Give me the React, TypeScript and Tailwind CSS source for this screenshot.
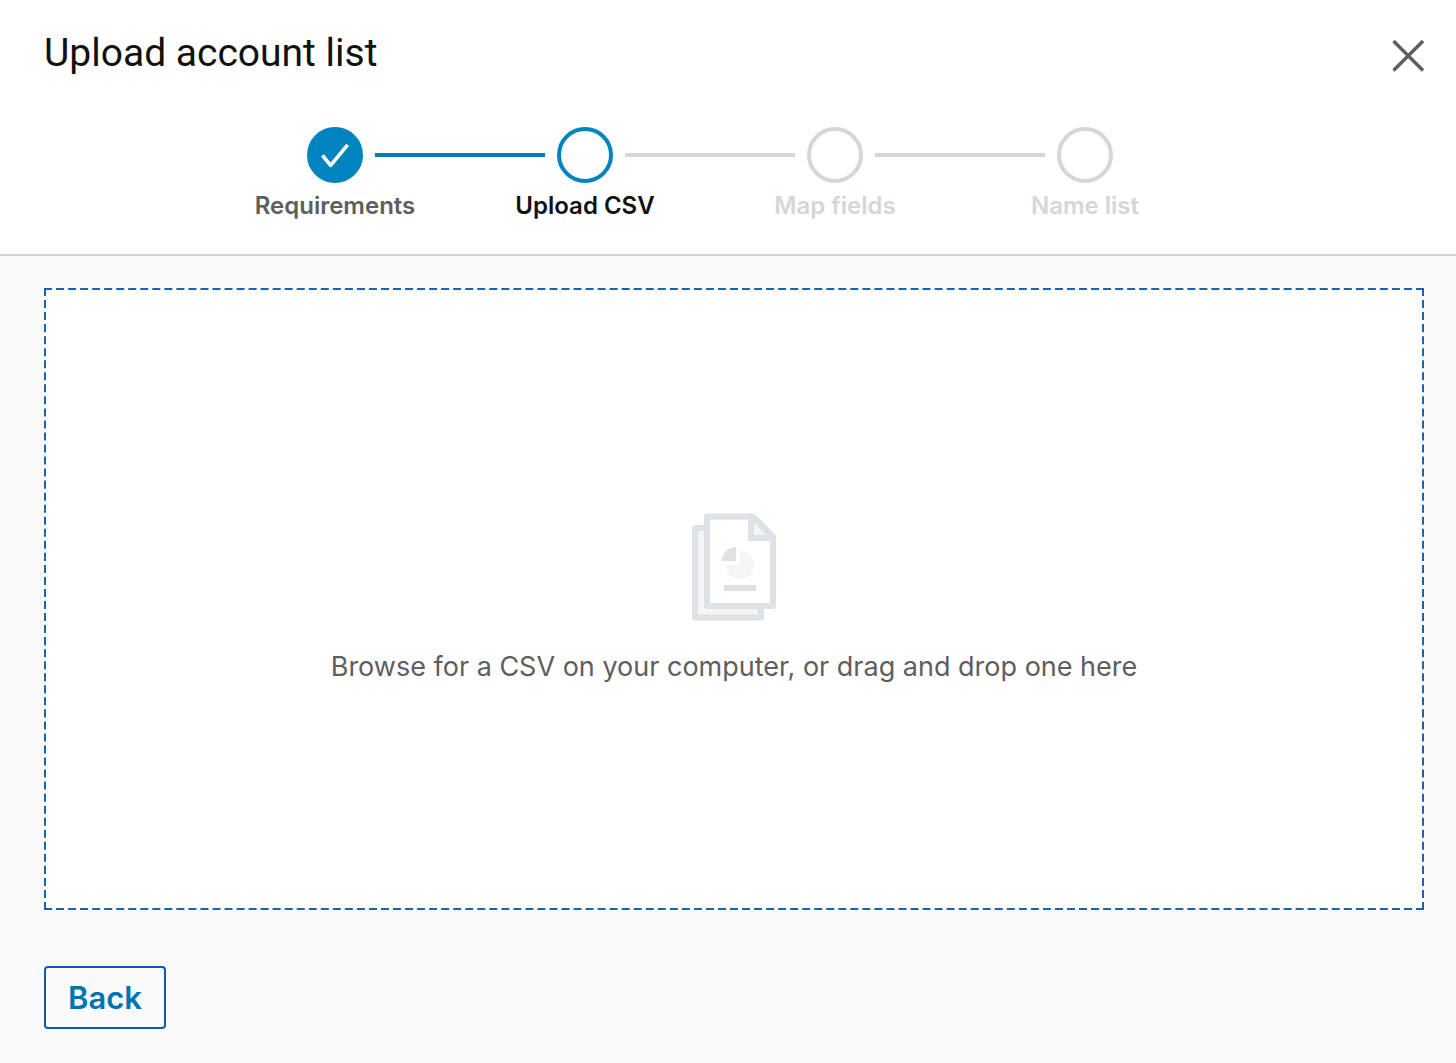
import React from 'react';

type StepStatus = 'done' | 'current' | 'upcoming';

interface Step {
  label: string;
  status: StepStatus;
}

const steps: Step[] = [
  { label: 'Requirements', status: 'done' },
  { label: 'Upload CSV', status: 'current' },
  { label: 'Map fields', status: 'upcoming' },
  { label: 'Name list', status: 'upcoming' },
];

const circleStyles: Record<StepStatus, string> = {
  done: 'border-[#0084bf] bg-[#0084bf]',
  current: 'border-[#0084bf] bg-white',
  upcoming: 'border-[#d6d6d6] bg-white',
};

const labelStyles: Record<StepStatus, string> = {
  done: 'text-[#5e5e5e]',
  current: 'text-[#111111]',
  upcoming: 'text-[#d6d6d6]',
};

const Connector: React.FC<{ hidden: boolean; active: boolean }> = ({ hidden, active }) => (
  <span className={`h-1 flex-1 ${hidden ? 'bg-transparent' : active ? 'bg-[#007dbb]' : 'bg-[#d6d6d6]'}`} />
);

const Stepper: React.FC = () => (
  <ol className="mx-auto flex w-full max-w-[1000px]">
    {steps.map((step, i) => (
      <li
        key={step.label}
        aria-current={step.status === 'current' ? 'step' : undefined}
        className="flex flex-1 flex-col items-center"
      >
        <div className="flex w-full items-center">
          <Connector hidden={i === 0} active={step.status !== 'upcoming'} />
          <span
            className={`mx-3 flex size-14 items-center justify-center rounded-full border-4 ${circleStyles[step.status]}`}
          >
            {step.status === 'done' && (
              <svg viewBox="0 0 48 48" className="size-12 shrink-0" fill="none" stroke="#fff" strokeWidth="3.6" aria-hidden="true">
                <path d="M11.4 24.4 L19.6 34.4 L36.6 13.8" strokeLinejoin="round" />
              </svg>
            )}
          </span>
          <Connector hidden={i === steps.length - 1} active={step.status === 'done'} />
        </div>
        <span className={`mt-[7px] text-2xl font-semibold ${labelStyles[step.status]}`}>{step.label}</span>
      </li>
    ))}
  </ol>
);

const DocumentIcon: React.FC = () => (
  <svg width="84" height="108" viewBox="0 0 84 108" aria-hidden="true">
    <rect x="3" y="15" width="66" height="89.5" fill="#f3f5f7" stroke="#dce2e5" strokeWidth="6" strokeLinejoin="round" />
    <path d="M15 3.5 H61 L81 23.5 V93 H15 Z" fill="#fff" stroke="#dce2e5" strokeWidth="6" strokeLinejoin="round" />
    <path d="M59 3.5 V25 H81 L61 4.5 Z" fill="#f3f5f7" stroke="#dce2e5" strokeWidth="6" strokeLinejoin="round" />
    <path d="M56 20 V28 H64 Z" fill="#dce2e5" />
    <path d="M48 38 A14 14 0 1 1 34 52 H48 Z" fill="#f3f5f7" />
    <path d="M44 48 H30 A14 14 0 0 1 44 34 Z" fill="#dce2e5" />
    <rect x="32" y="72" width="32" height="6" fill="#dce2e5" />
  </svg>
);

// pathLength keeps a full dash in every corner at any size
const DashedOutline: React.FC = () => (
  <svg
    className="pointer-events-none absolute inset-0 size-full"
    stroke="#1a63b3"
    strokeWidth="4"
    strokeDasharray="8 4"
    aria-hidden="true"
  >
    <line x1="0" y1="0" x2="100%" y2="0" pathLength={1376} />
    <line x1="0" y1="100%" x2="100%" y2="100%" pathLength={1376} />
    <line x1="0" y1="0" x2="0" y2="100%" pathLength={620} />
    <line x1="100%" y1="0" x2="100%" y2="100%" pathLength={620} />
  </svg>
);

const App: React.FC = () => {
  return (
    <div className="flex min-h-screen flex-col bg-[#fafafa] font-['Inter','Liberation_Sans',sans-serif]">
      <header className="border-b-2 border-[#d2d2d2] bg-white pb-8">
        <div className="flex items-start justify-between pt-7 pr-8 pl-11">
          <h1 className="font-['Roboto','Inter',sans-serif] text-[39px] leading-[51px] text-[#111111]">
            Upload account list
          </h1>
          <button type="button" aria-label="Close" className="mt-3 text-[#5e5e5e]">
            <svg width="32" height="32" viewBox="0 0 32 32" stroke="currentColor" strokeWidth="3.4" aria-hidden="true">
              <path d="M1.5 1 L31 30.5 M31 1 L1.5 30.5" />
            </svg>
          </button>
        </div>
        <div className="mt-12 pr-9">
          <Stepper />
        </div>
      </header>

      <main className="flex flex-1 flex-col items-start gap-14 pt-8 pr-8 pb-[34px] pl-11">
        <label className="relative flex w-full flex-1 cursor-pointer flex-col items-center justify-center bg-white">
          <DashedOutline />
          <DocumentIcon />
          <span className="mt-7 text-center text-[27px] leading-9 text-[#5e5e5e]">
            Browse for a CSV on your computer, or drag and drop one here
          </span>
          <input type="file" accept=".csv" className="sr-only" />
        </label>

        <button
          type="button"
          className="rounded border-2 border-[#0a5cab] px-[22px] py-3 text-[31px] leading-[35px] font-semibold text-[#0073b1]"
        >
          Back
        </button>
      </main>
    </div>
  );
};

export default App;
